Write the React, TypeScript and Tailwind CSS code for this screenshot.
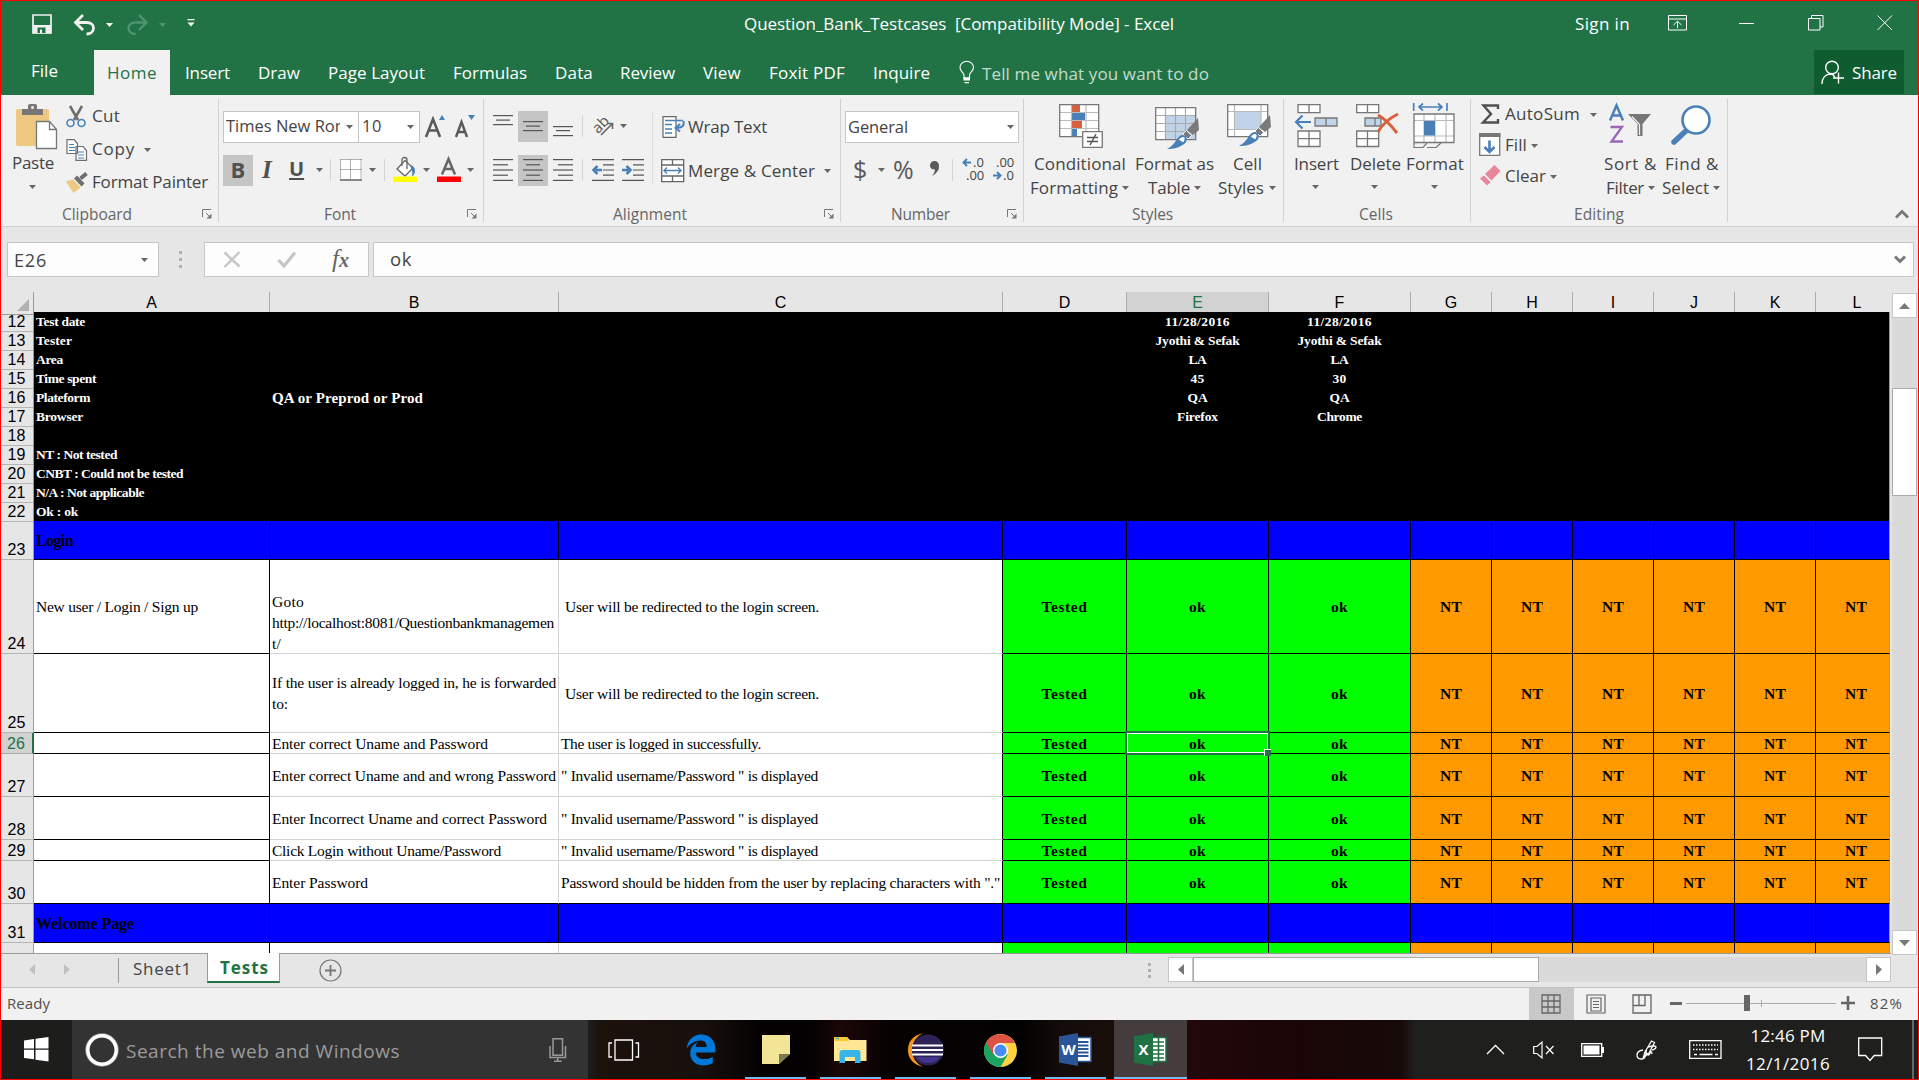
import { useLayoutEffect, useRef, useState, type ReactNode } from "react";
import { FaEdgeLegacy } from "react-icons/fa6";

/* Single line of text tracked so that it fills exactly w pixels. */
function T({ w, className = "", children }: { w: number; className?: string; children: string }) {
  const ref = useRef<HTMLSpanElement>(null);
  const [spacing, setSpacing] = useState(0);
  useLayoutEffect(() => {
    const natural = ref.current!.getBoundingClientRect().width;
    setSpacing((w - natural) / children.length);
  }, []);
  return (
    <span className={`block shrink-0 leading-none whitespace-pre ${className}`} style={{ width: w }}>
      <span ref={ref} style={{ letterSpacing: spacing }}>
        {children}
      </span>
    </span>
  );
}

function Svg({ w, h, className = "", children }: { w: number; h: number; className?: string; children: ReactNode }) {
  return (
    <svg width={w} height={h} viewBox={`0 0 ${w} ${h}`} fill="none" className={`block shrink-0 overflow-visible ${className}`}>
      {children}
    </svg>
  );
}

function Caret({ className = "text-[#666]" }: { className?: string }) {
  return (
    <Svg w={7} h={4} className={className}>
      <path d="M0 0h7L3.5 4z" fill="currentColor" />
    </Svg>
  );
}

function Launcher({ className = "" }: { className?: string }) {
  return (
    <Svg w={10} h={10} className={className}>
      <path d="M.5 8V.5H9M4 4l4 4" stroke="#777" />
      <path d="M9.5 4.5v5h-5z" fill="#777" />
    </Svg>
  );
}

const Sep = () => <div className="mt-1 h-[123px] w-px shrink-0 bg-[#d2d2d2]" />;
const MiniSep = ({ className = "" }: { className?: string }) => (
  <div className={`h-[22px] w-px shrink-0 bg-[#d4d4d4] ${className}`} />
);

function Lines({ rows, className = "" }: { rows: [number, number, number][]; className?: string }) {
  return (
    <Svg w={20} h={22} className={className}>
      {rows.map(([x, y, w]) => (
        <rect key={y} x={x} y={y} width={w} height={1.2} fill="#555" />
      ))}
    </Svg>
  );
}

function TitleBar() {
  return (
    <div className="flex h-[49px] items-start text-white">
      <Svg w={20} h={20} className="mt-[13px] ml-[31px]">
        <path d="M1 1h18v18H1z" stroke="#f1f1f1" strokeWidth="1.7" />
        <path d="M1 11h18v8.5H1z" fill="#f1f1f1" />
        <path d="M5.5 13.500h8V19h-3.500v-3.500h-2V19H5.500z" fill="#217346" />
      </Svg>
      <Svg w={23} h={20} className="mt-[14px] ml-[21px]">
        <path d="M3 7.500h10.500c4 0 7 2 7 5.500s-3 6-7 6" stroke="#f1f1f1" strokeWidth="2.800" />
        <path d="M10 0 2.500 7.500 10 15" stroke="#f1f1f1" strokeWidth="2.800" />
      </Svg>
      <Caret className="mt-[22px] ml-[10px] text-white" />
      <Svg w={23} h={20} className="mt-[14px] ml-[13px]">
        <path d="M20 7.500H9.500c-4 0-7 2-7 5.500s3 6 7 6M13 0l7.500 7.500L13 15" stroke="#4f9370" strokeWidth="2.400" />
      </Svg>
      <Caret className="mt-[22px] ml-[10px] text-[#4f9370]" />
      <Svg w={8} h={8} className="mt-[18px] ml-[21px]">
        <path d="M.5 0h7v1.300h-7zM.5 3.500h7L4 7.500z" fill="white" />
      </Svg>
      <T w={430} className="mt-[14px] ml-[549px] text-[17px]">Question_Bank_Testcases  [Compatibility Mode] - Excel</T>
      <T w={55} className="mt-[14px] ml-[401px] text-[17px]">Sign in</T>
      <Svg w={20} h={16} className="mt-[14px] ml-[38px]">
        <path d="M.5.500h18v14.500H.5zM.5 4h18M9.500 13V6.500M5.500 10l4-3.800 4 3.800" stroke="white" />
      </Svg>
      <div className="mt-[22px] ml-[51px] h-px w-[15px] bg-white" />
      <Svg w={16} h={16} className="mt-[14px] ml-[54px]">
        <path d="M.5 3.500h11.500v11.500H.5zM3.500 3.500V.500H15v11.500h-3" stroke="white" />
      </Svg>
      <Svg w={16} h={16} className="mt-[14px] ml-[53px]">
        <path d="m.5.500 14.500 14.500M15 .500.500 15" stroke="white" />
      </Svg>
    </div>
  );
}

function Tabs() {
  return (
    <div className="flex h-[45px] items-start text-[17px] text-white">
      <T w={27} className="mt-[12px] ml-[30px]">File</T>
      <div className="ml-[36px] h-[45px] w-[76px] bg-[#f1f1f1] pt-[14px] pl-[13px] text-[#217346]">
        <T w={50}>Home</T>
      </div>
      <T w={45} className="mt-[14px] ml-[15px]">Insert</T>
      <T w={42} className="mt-[14px] ml-[28px]">Draw</T>
      <T w={97} className="mt-[14px] ml-[28px]">Page Layout</T>
      <T w={74} className="mt-[14px] ml-[28px]">Formulas</T>
      <T w={38} className="mt-[14px] ml-[28px]">Data</T>
      <T w={55} className="mt-[14px] ml-[27px]">Review</T>
      <T w={38} className="mt-[14px] ml-[28px]">View</T>
      <T w={76} className="mt-[14px] ml-[28px]">Foxit PDF</T>
      <T w={57} className="mt-[14px] ml-[28px]">Inquire</T>
      <Svg w={16} h={23} className="mt-[11px] ml-[29px]">
        <path d="M5 17v-3C4 11 1 10 1 6.500a6.500 6 0 0 1 13.500 0C14.500 10 11 11 10.500 14v3z" stroke="white" strokeWidth="1.100" />
        <path d="M4.500 16.500h6.500v3H4.500zM5.500 21h4.500v1.300H5.500z" fill="white" />
      </Svg>
      <T w={227} className="mt-[15px] ml-[7px] text-[#c3dccd]">Tell me what you want to do</T>
      <div className="ml-[605px] flex h-[44px] w-[90px] items-center bg-[#0e5c2f]">
        <Svg w={24} h={25} className="ml-[7px]">
          <path d="M1 24c0-6 3.500-10 9.500-10M14 17.500c-1-2-2-3-3.500-3.500" stroke="white" strokeWidth="1.400" />
          <circle cx="11" cy="7.500" r="6.300" stroke="white" strokeWidth="1.400" />
          <path d="M17.500 12.500v11M12 18h11" stroke="white" strokeWidth="1.400" />
        </Svg>
        <T w={45} className="ml-[7px]">Share</T>
      </div>
    </div>
  );
}

function Clipboard() {
  return (
    <div className="flex w-[217px] shrink-0 flex-col">
      <div className="flex h-[108px]">
        <div className="flex w-[60px] flex-col">
          <Svg w={42} h={46} className="mt-[9px] ml-[15px]">
            <rect x="0" y="5" width="33" height="37" rx="2" fill="#eec780" />
            <path d="M6 5h6V1.500Q12 0 14 0h5q2 0 2 1.500V5h6v6H6z" fill="#777" />
            <circle cx="16.500" cy="3.500" r="1.500" fill="#f1f1f1" />
            <path d="M20.500 17.500h13l7 8v19h-20z" fill="white" stroke="#777" strokeWidth="1.300" />
            <path d="M33.500 17.500v8h7" stroke="#777" strokeWidth="1.300" />
          </Svg>
          <T w={42} className="mt-[4px] ml-[11px]">Paste</T>
          <div className="mt-[14px] ml-[28px]"><Caret /></div>
        </div>
        <div className="mt-[5px] ml-[5px] flex flex-col">
          <div className="flex h-[33px] items-center">
            <Svg w={20} h={22}>
              <path d="M4 0l8 14M16 0 8 14" stroke="#6e6e6e" strokeWidth="2.600" />
              <circle cx="4.500" cy="17" r="3.500" stroke="#4a80b8" strokeWidth="1.600" />
              <circle cx="15.500" cy="17" r="3.500" stroke="#4a80b8" strokeWidth="1.600" />
            </Svg>
            <T w={28} className="-mt-[2px] ml-[6px]">Cut</T>
          </div>
          <div className="flex h-[33px] items-center">
            <Svg w={21} h={22}>
              <path d="M1 .600h7l3.500 4V14.500H1zM10 7.500h7l3.500 4v9.900H10z" fill="white" stroke="#6e6e6e" strokeWidth="1.200" />
              <path d="M3 5.500h5M3 8.500h6M3 11.500h6M12 13h6M12 16h6M12 19h6" stroke="#4a80b8" strokeWidth="1.200" />
            </Svg>
            <T w={43} className="-mt-[2px] ml-[5px]">Copy</T>
            <div className="ml-[9px]"><Caret /></div>
          </div>
          <div className="flex h-[33px] items-center">
            <Svg w={22} h={21}>
              <path d="M0 9.500 7 7.500l7.500 8L7.500 21z" fill="#eec780" />
              <path d="m8 6.500 3-3 7.500 8-3 3z" fill="#6e6e6e" />
              <path d="m14.500 6.500 6-5" stroke="#6e6e6e" strokeWidth="4" />
            </Svg>
            <T w={116} className="-mt-[2px] ml-[4px]">Format Painter</T>
          </div>
        </div>
      </div>
      <div className="flex h-[24px] items-center text-[15.500px] text-[#666]">
        <T w={70} className="mt-[2px] ml-[61px]">Clipboard</T>
        <Launcher className="ml-[70px]" />
      </div>
    </div>
  );
}

function FontGroup() {
  return (
    <div className="flex w-[264px] shrink-0 flex-col">
      <div className="h-[108px] pt-[15px]">
        <div className="flex h-[33px] items-center">
          <div className="ml-[4px] flex h-[32px] w-[136px] items-center border border-[#c6c6c6] bg-white">
            <div className="ml-[2px] w-[114px] overflow-hidden py-1"><T w={124} className="text-[16.500px]">Times New Rom</T></div>
            <div className="ml-[6px]"><Caret /></div>
          </div>
          <div className="-ml-px flex h-[32px] w-[62px] items-center border border-[#c6c6c6] bg-white">
            <T w={20} className="ml-[3px] text-[16.500px]">10</T>
            <div className="ml-[25px]"><Caret /></div>
          </div>
          <Svg w={21} h={24} className="ml-[5px]">
            <path d="M1 22 8 4l7 18M3.500 15.500h9" stroke="#5a5a5a" strokeWidth="2.600" />
            <path d="M14 5h6l-3-5z" fill="#4a80b8" />
          </Svg>
          <Svg w={21} h={24} className="ml-[9px]">
            <path d="m1 22 5.500-15L12 22M3.500 17h6" stroke="#5a5a5a" strokeWidth="2.400" />
            <path d="M13 0h7l-3.500 5z" fill="#4a80b8" />
          </Svg>
        </div>
        <div className="mt-[11px] flex h-[32px] items-center text-[#505050]">
          <div className="ml-[4px] flex h-[31px] w-[30px] items-center justify-center bg-[#c5c5c5] pb-[2px] text-[22px] leading-none font-bold">B</div>
          <span className="-mt-[2px] ml-[9px] w-[14px] font-['Liberation_Serif'] text-[25px] leading-none font-bold italic">I</span>
          <span className="-mt-[2px] ml-[13px] w-[17px] text-[20px] leading-none font-bold underline underline-offset-2">U</span>
          <div className="ml-[10px]"><Caret /></div>
          <MiniSep className="ml-[7px]" />
          <Svg w={22} h={22} className="ml-[9px]">
            <rect width="22" height="22" fill="white" />
            <path d="M.5.500h21M.5 10.500h21M.5.500v20M21 .500v20M10.500.500v20" stroke="#666" strokeDasharray="1 1" />
            <path d="M0 21h22" stroke="#555" strokeWidth="1.400" />
          </Svg>
          <div className="ml-[7px]"><Caret /></div>
          <MiniSep className="ml-[8px]" />
          <Svg w={25} h={26} className="ml-[8px]">
            <path d="M12 3.500 20 11l-8 8-8-7z" fill="white" stroke="#666" strokeWidth="1.300" />
            <path d="M9 9V3q0-2.500 2.500-2.500T14 3v9" stroke="#666" strokeWidth="1.300" />
            <path d="M17 8q5 1 5 5.500 0 4-3 6 1-5-1-8z" fill="#4a80b8" />
            <path d="M0 19.500h24V25H0z" fill="#ff0" />
          </Svg>
          <div className="ml-[5px]"><Caret /></div>
          <Svg w={25} h={26} className="ml-[7px]">
            <path d="m5 17.500 6.500-15.500L18 17.500M7.500 12h8" stroke="#666" strokeWidth="2.500" />
            <path d="M0 19.500h24V25H0z" fill="red" />
          </Svg>
          <div className="ml-[5px]"><Caret /></div>
        </div>
      </div>
      <div className="flex h-[24px] items-center text-[15.500px] text-[#666]">
        <T w={32} className="mt-[2px] ml-[105px]">Font</T>
        <Launcher className="ml-[111px]" />
      </div>
    </div>
  );
}

const justified = (xs: [number, number][]): [number, number, number][] => xs.map(([x, w], i) => [x, i * 5.2, w]);

function Alignment() {
  return (
    <div className="flex w-[356px] shrink-0 flex-col">
      <div className="flex h-[108px]">
        <div className="w-[168px] pt-[15px]">
          <div className="flex h-[32px] items-center">
            <Lines className="ml-[9px]" rows={[[0, 0, 20], [3, 4.500, 14], [0, 9, 20]]} />
            <div className="ml-[5px] flex h-[31px] w-[30px] items-center justify-center bg-[#c5c5c5]">
              <Lines rows={[[0, 6, 20], [3, 10.500, 14], [0, 15, 20]]} />
            </div>
            <Lines className="ml-[5px]" rows={[[0, 11, 20], [3, 15, 14], [0, 20, 20]]} />
            <MiniSep className="ml-[9px]" />
            <Svg w={22} h={20} className="ml-[10px]">
              <text x="-1" y="14" transform="rotate(-45 7 9)" fontSize="15" fill="#555" fontFamily="Open Sans">ab</text>
              <path d="M8 19 19 8M14 7.500h5.500V13" stroke="#666" strokeWidth="1.600" />
            </Svg>
            <div className="ml-[5px]"><Caret /></div>
          </div>
          <div className="mt-[12px] flex h-[32px] items-center">
            <Lines className="ml-[9px]" rows={justified([[0, 20], [0, 15], [0, 20], [0, 15], [0, 20]])} />
            <div className="ml-[5px] flex h-[31px] w-[30px] items-center justify-center bg-[#c5c5c5]">
              <Lines rows={justified([[0, 20], [3, 14], [0, 20], [3, 14], [0, 20]])} />
            </div>
            <Lines className="ml-[5px]" rows={justified([[0, 20], [5, 15], [0, 20], [5, 15], [0, 20]])} />
            <MiniSep className="ml-[9px]" />
            <Svg w={22} h={22} className="ml-[9px]">
              <path d="M0 .600h22M11 5.800h11M11 11h11M11 16.200h11M0 21.400h22" stroke="#555" strokeWidth="1.200" />
              <path d="M10 11H2M5.500 7 1.500 11l4 4" stroke="#4a80b8" strokeWidth="2.600" />
            </Svg>
            <Svg w={22} h={22} className="ml-[8px]">
              <path d="M0 .600h22M11 5.800h11M11 11h11M11 16.200h11M0 21.400h22" stroke="#555" strokeWidth="1.200" />
              <path d="M0 11h8M4.500 7l4 4-4 4" stroke="#4a80b8" strokeWidth="2.600" />
            </Svg>
          </div>
        </div>
        <div className="mt-[17px] h-[73px] w-px bg-[#dedede]" />
        <div className="pt-[15px]">
          <div className="flex h-[34px] items-center">
            <Svg w={24} h={23} className="ml-[9px]">
              <path d="M1 .600h13v20.800H1z" fill="white" stroke="#666" strokeWidth="1.200" />
              <path d="M3 4.500h18M3 8.500h7M3 13h7M3 17h7" stroke="#4a80b8" strokeWidth="1.300" />
              <path d="M21.500 5q1.500 7-7 7M18 8l-4.500 4 4.500 3.500" stroke="#4a80b8" strokeWidth="2" />
            </Svg>
            <T w={79} className="-mt-[2px] ml-[2px]">Wrap Text</T>
          </div>
          <div className="mt-[10px] flex h-[33px] items-center">
            <Svg w={24} h={24} className="ml-[8px]">
              <path d="M.7.700h22v22H.7zM.7 6h22M.7 17h22M11.500.700V6M11.500 17v6" fill="white" stroke="#666" strokeWidth="1.300" />
              <path d="M3 11.500h17M6 8.500l-3 3 3 3M17 8.500l3 3-3 3" stroke="#4a80b8" strokeWidth="1.400" />
            </Svg>
            <T w={127} className="ml-[3px]">Merge &amp; Center</T>
            <div className="ml-[9px]"><Caret /></div>
          </div>
        </div>
      </div>
      <div className="flex h-[24px] items-center text-[15.500px] text-[#666]">
        <T w={74} className="mt-[2px] ml-[129px]">Alignment</T>
        <Launcher className="ml-[137px]" />
      </div>
    </div>
  );
}

function NumberGroup() {
  return (
    <div className="flex w-[182px] shrink-0 flex-col">
      <div className="h-[108px] pt-[16px]">
        <div className="ml-[4px] flex h-[32px] w-[174px] items-center border border-[#c6c6c6] bg-white">
          <T w={60} className="ml-[2px] text-[16.500px]">General</T>
          <div className="ml-[99px]"><Caret /></div>
        </div>
        <div className="mt-[11px] flex h-[32px] items-center text-[#5a5a5a]">
          <span className="-mt-[2px] ml-[12px] w-[16px] text-[25px] leading-none">$</span>
          <div className="ml-[9px]"><Caret /></div>
          <span className="-mt-[2px] ml-[8px] w-[23px] text-[25px] leading-none tracking-tighter">%</span>
          <Svg w={12} h={16} className="-mt-[2px] ml-[13px]">
            <path d="M1 4.500A4.500 4.500 0 0 1 10 4.500Q10.500 11 3 15q3-3.500 3-6.500-5 0-5-4z" fill="#5a5a5a" />
          </Svg>
          <MiniSep className="ml-[11px]" />
          <Svg w={24} h={26} className="ml-[9px]">
            <text x="11" y="10" fontSize="13" fill="#444" fontFamily="Open Sans">.0</text>
            <text x="4" y="23" fontSize="13" fill="#444" fontFamily="Open Sans">.00</text>
            <path d="M9 5.500H2M5 2 1.500 5.500 5 9" stroke="#4a80b8" strokeWidth="2" />
          </Svg>
          <Svg w={24} h={26} className="ml-[6px]">
            <text x="4" y="10" fontSize="13" fill="#444" fontFamily="Open Sans">.00</text>
            <text x="11" y="23" fontSize="13" fill="#444" fontFamily="Open Sans">.0</text>
            <path d="M1 18.500h7M5 15l3.500 3.500L5 22" stroke="#4a80b8" strokeWidth="2" />
          </Svg>
        </div>
      </div>
      <div className="flex h-[24px] items-center text-[15.500px] text-[#666]">
        <T w={59} className="mt-[2px] ml-[50px]">Number</T>
        <Launcher className="ml-[57px]" />
      </div>
    </div>
  );
}

function Brush() {
  return (
    <g>
      <path d="m43 11 1 12-6 5-6-5z" fill="#7a7a7a" />
      <path d="m31.500 23.500 5 5-3.500 3.500-5-5z" fill="#7a7a7a" stroke="#f1f1f1" />
      <path d="M22 32q4-6 9-3 3 6-5 10-6 3.500-14 3 6-3 10-10z" fill="#4a80b8" />
      <path d="M23 33q3-5 7-3 1 4-2 6-3-2-5-3z" fill="white" stroke="#4a80b8" strokeWidth="1.300" />
    </g>
  );
}

function Styles() {
  return (
    <div className="flex w-[259px] shrink-0 flex-col">
      <div className="flex h-[108px]">
        <div className="ml-[6px] w-[101px] pt-[9px]">
          <Svg w={46} h={45} className="ml-[29px]">
            <path d="M.7.700h39v32H.7z" fill="white" />
            <path d="M13 1h8v7h-8zM13 17h10v7H13z" fill="#d9603f" />
            <path d="M13 9h13v7H13zM13 25h5v7h-5z" fill="#4a80b8" />
            <path d="M.7 8.500h39M.7 16.500h39M.7 24.500h39M12.500.700v32M27 .700v32" stroke="#bbb" strokeWidth="1.200" />
            <path d="M.7.700h39v32H.7z" stroke="#777" strokeWidth="1.300" />
            <path d="M23.700 27.700h19.600v15.600H23.700z" fill="white" stroke="#777" strokeWidth="1.300" />
            <path d="M28 33.500h11M28 37.500h11M37 30l-6 11" stroke="#555" strokeWidth="1.400" />
          </Svg>
          <T w={92} className="mt-[6px] ml-[4px]">Conditional</T>
          <div className="mt-[7px] flex items-center">
            <T w={88}>Formatting</T>
            <div className="ml-[4px]"><Caret /></div>
          </div>
        </div>
        <div className="ml-[3px] w-[82px] pt-[12px]">
          <Svg w={46} h={45} className="ml-[21px]">
            <path d="M.7.700h40v32H.7z" fill="white" />
            <path d="M10 9h31v24H10z" fill="#c0d3e9" />
            <path d="M.7 8.500h40M.7 16.500h40M.7 24.500h40M10.500.700v32M20.500.700v32M30.500.700v32" stroke="#aaa" strokeWidth="1.200" />
            <path d="M.7.700h40v32H.7z" stroke="#777" strokeWidth="1.300" />
            <Brush />
          </Svg>
          <T w={79} className="mt-[3px] ml-[1px]">Format as</T>
          <div className="mt-[7px] ml-[14px] flex items-center">
            <T w={42}>Table</T>
            <div className="ml-[4px]"><Caret /></div>
          </div>
        </div>
        <div className="w-[63px] pt-[9px]">
          <Svg w={46} h={45} className="ml-[11px]">
            <path d="M.7.700h40v32H.7z" fill="white" />
            <path d="M8 8h26v17H8z" fill="#c0d3e9" />
            <path d="M.7 7.500h40M.7 25.500h40M7.500.700v32M34 .700v32" stroke="#bbb" strokeWidth="1.200" />
            <path d="M.7.700h40v32H.7z" stroke="#777" strokeWidth="1.300" />
            <Brush />
          </Svg>
          <T w={29} className="mt-[6px] ml-[17px]">Cell</T>
          <div className="mt-[7px] ml-[2px] flex items-center">
            <T w={46}>Styles</T>
            <div className="ml-[5px]"><Caret /></div>
          </div>
        </div>
      </div>
      <div className="flex h-[24px] items-center text-[15.500px] text-[#666]">
        <T w={41} className="mt-[2px] ml-[108px]">Styles</T>
      </div>
    </div>
  );
}

function Cells() {
  return (
    <div className="flex w-[186px] shrink-0 flex-col">
      <div className="flex h-[108px]">
        <div className="ml-[10px] w-[48px] pt-[9px]">
          <Svg w={46} h={45}>
            <path d="M4 .700h22v8H4zM15 .700v8M4 27h22v15.500H4zM4 34.700h22M15 27v15.500" fill="white" stroke="#777" strokeWidth="1.300" />
            <path d="M21 14h22v8H21zM32 14v8" fill="#c0d3e9" stroke="#777" strokeWidth="1.300" />
            <path d="M17 18H2M8.500 11.500 2 18l6.500 6.500" stroke="#4a80b8" strokeWidth="2.200" />
          </Svg>
          <T w={45} className="mt-[6px]">Insert</T>
          <div className="mt-[13px] ml-[18px]"><Caret /></div>
        </div>
        <div className="ml-[8px] w-[52px] pt-[9px]">
          <Svg w={46} h={45} className="ml-[6px]">
            <path d="M.7.700h22v8H.7zM11.500.700v8M.7 27h22v15.500H.7zM.7 34.700h22M11.500 27v15.500" fill="white" stroke="#777" strokeWidth="1.300" />
            <path d="M9 14h16v8H9zM19 14v8" fill="#c0d3e9" stroke="#777" strokeWidth="1.300" />
            <path d="M22 11q9 5 19 18M42 10Q28 17 22 28" stroke="#d9603f" strokeWidth="3" />
          </Svg>
          <T w={51} className="mt-[6px]">Delete</T>
          <div className="mt-[13px] ml-[21px]"><Caret /></div>
        </div>
        <div className="ml-[4px] w-[60px] pt-[8px]">
          <Svg w={44} h={46} className="ml-[7px]">
            <path d="M.7 0v8M34 0v8M6 4h23M10 .500 6 4l4 3.500M25 .500 29 4l-4 3.500" stroke="#4a80b8" strokeWidth="1.700" />
            <path d="M1 11h40v28.500H1z" fill="white" />
            <path d="M1 17.500h40M1 33h40M11 11v28M22 11v28M33 11v28" stroke="#bbb" strokeWidth="1.200" />
            <path d="M11 18h11v14.500H11z" fill="#4a80b8" />
            <path d="M1 11h40v28.500H1z" stroke="#777" strokeWidth="1.300" />
            <path d="M1 40v4.500h9l4-4.500M14 44.500h9l5-4.500" stroke="#777" strokeWidth="1.200" />
          </Svg>
          <T w={58} className="mt-[6px]">Format</T>
          <div className="mt-[13px] ml-[25px]"><Caret /></div>
        </div>
      </div>
      <div className="flex h-[24px] items-center text-[15.500px] text-[#666]">
        <T w={34} className="mt-[2px] ml-[75px]">Cells</T>
      </div>
    </div>
  );
}

function Editing() {
  return (
    <div className="flex w-[256px] shrink-0 flex-col">
      <div className="flex h-[108px]">
        <div className="w-[127px] pt-[4px]">
          <div className="flex h-[31px] items-center">
            <Svg w={18} h={20} className="-mt-[2px] ml-[10px]">
              <path d="M17 5V1.500H2.500L10 10l-8 8.500h15V15" stroke="#505050" strokeWidth="2.400" />
            </Svg>
            <T w={75} className="-mt-[2px] ml-[6px]">AutoSum</T>
            <div className="ml-[10px]"><Caret /></div>
          </div>
          <div className="flex h-[31px] items-center">
            <Svg w={22} h={24} className="-mt-[2px] ml-[8px]">
              <path d="M.7.700h20v21.600H.7z" fill="white" stroke="#777" strokeWidth="1.300" />
              <path d="M0 0h21.400v4H0z" fill="#777" />
              <path d="M10.500 7.500V19M5.500 14l5 5 5-5" stroke="#4a80b8" strokeWidth="2.600" />
            </Svg>
            <T w={22} className="-mt-[2px] ml-[4px]">Fill</T>
            <div className="ml-[4px]"><Caret /></div>
          </div>
          <div className="flex h-[31px] items-center">
            <Svg w={21} h={21} className="-mt-[2px] ml-[9px]">
              <path d="M14.500 0 20.500 6l-9 9.500L5 9z" fill="#e8879a" />
              <path d="m4 10.500 6.500 6.500L7 20.500 0 13.500z" fill="#e8879a" />
            </Svg>
            <T w={41} className="-mt-[2px] ml-[4px]">Clear</T>
            <div className="ml-[4px]"><Caret /></div>
          </div>
        </div>
        <div className="ml-[6px] w-[56px] pt-[9px]">
          <Svg w={46} h={41} className="ml-[5px]">
            <path d="m1 16.500 6.500-15L14 16.500M3.500 11.500h8" stroke="#4a80b8" strokeWidth="2.500" />
            <path d="M1.500 23H13L2.500 37.500H14" stroke="#9a66b8" strokeWidth="2.300" />
            <path d="M19 10h23L33.500 20v12h-5V20z" fill="#777" />
            <path d="m23 12.500 7.500 8V31" stroke="#f1f1f1" strokeWidth="1.200" />
          </Svg>
          <T w={53} className="mt-[10px]">Sort &amp;</T>
          <div className="mt-[7px] ml-[2px] flex items-center">
            <T w={38}>Filter</T>
            <div className="ml-[4px]"><Caret /></div>
          </div>
        </div>
        <div className="ml-[1px] w-[62px] pt-[10px]">
          <Svg w={42} h={42} className="ml-[10px]">
            <path d="M3 37 18 23" stroke="#4a80b8" strokeWidth="5.500" strokeLinecap="round" />
            <circle cx="25" cy="15" r="13.500" fill="white" stroke="#4a80b8" strokeWidth="2.600" />
          </Svg>
          <T w={54} className="mt-[8px] ml-[4px]">Find &amp;</T>
          <div className="mt-[7px] ml-[1px] flex items-center">
            <T w={47}>Select</T>
            <div className="ml-[4px]"><Caret /></div>
          </div>
        </div>
      </div>
      <div className="flex h-[24px] items-center text-[15.500px] text-[#666]">
        <T w={50} className="mt-[2px] ml-[103px]">Editing</T>
      </div>
    </div>
  );
}

function Ribbon() {
  return (
    <div className="flex h-[132px] border-b border-[#d2d2d2] bg-[#f1f1f1] text-[17px] text-[#444]">
      <Clipboard /><Sep /><FontGroup /><Sep /><Alignment /><Sep /><NumberGroup /><Sep /><Styles /><Sep /><Cells /><Sep /><Editing /><Sep />
      <Svg w={14} h={10} className="mt-[114px] ml-[167px]">
        <path d="m1 8.500 6-6 6 6" stroke="#777" strokeWidth="2.800" />
      </Svg>
    </div>
  );
}

function FormulaBar() {
  return (
    <div className="flex h-[65px] pt-[15px] text-[17px] text-[#444]">
      <div className="ml-[6px] flex h-[35px] w-[152px] items-center border border-[#c6c6c6] bg-[#fdfdfd]">
        <T w={33} className="ml-[6px] text-[18px]">E26</T>
        <div className="ml-[94px]"><Caret /></div>
      </div>
      <div className="mt-[9px] ml-[20px] flex w-[3px] flex-col gap-[4px]">
        <i className="h-[3px] bg-[#b0b0b0]" /><i className="h-[3px] bg-[#b0b0b0]" /><i className="h-[3px] bg-[#b0b0b0]" />
      </div>
      <div className="ml-[22px] flex h-[35px] w-[165px] items-center border border-[#c6c6c6] bg-[#fdfdfd]">
        <Svg w={18} h={17} className="ml-[18px]">
          <path d="m1.500 1.500 15 14M16.500 1 1.500 16" stroke="#c6c6c6" strokeWidth="2.400" />
        </Svg>
        <Svg w={20} h={17} className="ml-[36px]">
          <path d="m1.500 9 5.500 6L18 1.500" stroke="#c6c6c6" strokeWidth="3.200" />
        </Svg>
        <span className="-mt-[3px] ml-[35px] flex items-baseline font-['Liberation_Serif'] leading-none font-bold text-[#666] italic">
          <span className="text-[25px] font-normal">f</span>
          <span className="text-[20px]">x</span>
        </span>
      </div>
      <div className="ml-[4px] flex h-[35px] w-[1541px] items-center border border-[#c6c6c6] bg-[#fdfdfd]">
        <T w={22} className="ml-[16px] text-[18.500px]">ok</T>
        <Svg w={12} h={9} className="ml-[1482px]">
          <path d="m1 1.500 5 5 5-5" stroke="#777" strokeWidth="3" />
        </Svg>
      </div>
    </div>
  );
}

const GRID = "grid grid-cols-[33px_236px_289px_444px_124px_142px_142px_81px_81px_81px_81px_81px_74px]";

function ColumnHeader() {
  return (
    <div className={`${GRID} h-[20px] font-['Liberation_Sans'] text-[16px] leading-[21px] text-black`}>
      <div className="flex items-end justify-end border-r border-b border-[#9b9b9b] pr-[4px] pb-[3px]">
        <Svg w={12} h={12}><path d="M12 0v12H0z" fill="#b2b2b2" /></Svg>
      </div>
      {"ABCDEFGHIJKL".split("").map((c) => (
        <div
          key={c}
          className={
            c === "E"
              ? "border-r border-b-2 border-r-[#ababab] border-b-[#217346] bg-[#d2d2d2] text-center text-[#217346]"
              : c === "L"
                ? "border-b border-[#9b9b9b] pl-[8px] text-center"
                : "border-r border-b border-r-[#ababab] border-b-[#9b9b9b] text-center"
          }
        >
          {c}
        </div>
      ))}
    </div>
  );
}

function RowHead({ n, selected = false }: { n: string; selected?: boolean }) {
  return (
    <div
      className={`flex items-end justify-center pr-[1px] font-['Liberation_Sans'] text-[16px] leading-[19px] ${
        selected
          ? "border-r-2 border-b border-r-[#217346] border-b-[#ababab] bg-[#d2d2d2] text-[#217346]"
          : "border-r border-b border-r-[#9b9b9b] border-b-[#b5b5b5] text-black"
      }`}
    >
      {n}
    </div>
  );
}

type Fit = [string, number];
const dark: { n: string; a?: Fit; b?: Fit; e?: Fit; f?: Fit }[] = [
  { n: "12", a: ["Test date", 49], e: ["11/28/2016", 65], f: ["11/28/2016", 65] },
  { n: "13", a: ["Tester", 36], e: ["Jyothi & Sefak", 84], f: ["Jyothi & Sefak", 84] },
  { n: "14", a: ["Area", 27], e: ["LA", 18], f: ["LA", 18] },
  { n: "15", a: ["Time spent", 60], e: ["45", 14], f: ["30", 14] },
  { n: "16", a: ["Plateform", 54], b: ["QA or Preprod or Prod", 151], e: ["QA", 20], f: ["QA", 20] },
  { n: "17", a: ["Browser", 47], e: ["Firefox", 41], f: ["Chrome", 45] },
  { n: "18" },
  { n: "19", a: ["NT : Not tested", 81] },
  { n: "20", a: ["CNBT : Could not be tested", 147] },
  { n: "21", a: ["N/A : Not applicable", 108] },
  { n: "22", a: ["Ok : ok", 42] },
];

function DarkRow({ row }: { row: (typeof dark)[number] }) {
  const fit = (f?: Fit, cls = "") => (f ? <T w={f[1]} className={cls}>{f[0]}</T> : null);
  return (
    <div className={`${GRID} h-[19px] shrink-0`}>
      <RowHead n={row.n} />
      <div className="col-span-12 grid grid-cols-subgrid border-r border-[#9b9b9b] bg-black font-['Liberation_Serif'] text-[13.500px] font-bold text-white">
        <div className="flex items-center pb-px pl-[2px]">{fit(row.a)}</div>
        <div className="flex items-center pt-px pl-[2px]">{fit(row.b, "text-[15px]")}</div>
        <div />
        <div />
        <div className="flex items-center justify-center pr-px pb-px">{fit(row.e)}</div>
        <div className="flex items-center justify-center pr-px pb-px">{fit(row.f)}</div>
      </div>
    </div>
  );
}

function BlueRow({ n, label }: { n: string; label: Fit }) {
  return (
    <div className={`${GRID} h-[39px] shrink-0`}>
      <RowHead n={n} />
      <div className="flex items-center border-r border-b border-black bg-[#00f] pt-[2px] pl-[2px] font-['Liberation_Serif'] text-[16px] font-bold text-black">
        <T w={label[1]}>{label[0]}</T>
      </div>
      {"BCDEFGHIJK".split("").map((c) => (
        <div key={c} className="border-r border-b border-black bg-[#00f]" />
      ))}
      <div className="border-r border-b border-r-[#9b9b9b] border-b-black bg-[#00f]" />
    </div>
  );
}

type Data = { n: string; h: string; a?: Fit; b: Fit[]; c: Fit; indent?: boolean; low?: boolean; last?: boolean };
const tests: Data[] = [
  {
    n: "24", h: "h-[94px]", a: ["New user / Login / Sign up", 162],
    b: [["Goto", 32], ["http://localhost:8081/Questionbankmanagemen", 282], ["t/", 9]],
    c: ["User will be redirected to the login screen.", 254], indent: true, low: true,
  },
  {
    n: "25", h: "h-[79px]", b: [["If the user is already logged in, he is forwarded", 284], ["to:", 16]],
    c: ["User will be redirected to the login screen.", 254], indent: true,
  },
  { n: "26", h: "h-[21px]", b: [["Enter correct Uname and Password", 216]], c: ["The user is logged in successfully.", 200] },
  { n: "27", h: "h-[43px]", b: [["Enter correct Uname and and wrong Password", 284]], c: ['" Invalid username/Password " is displayed', 257] },
  { n: "28", h: "h-[43px]", b: [["Enter Incorrect Uname and correct Password", 275]], c: ['" Invalid username/Password " is displayed', 257] },
  { n: "29", h: "h-[21px]", b: [["Click Login without Uname/Password", 229]], c: ['" Invalid username/Password " is displayed', 257] },
  {
    n: "30", h: "h-[43px]", b: [["Enter Password", 96]],
    c: ['Password should be hidden from the user by replacing characters with "."', 439], last: true,
  },
];

const GREEN = "relative flex items-center justify-center border-r border-b border-black bg-[#0f0] pt-px text-[15.500px] font-bold";
const ORANGE = "flex items-center justify-center border-r border-b border-black bg-[#f90] pt-px text-[15.500px] font-bold";

function TestRow({ row }: { row: Data }) {
  const selected = row.n === "26";
  return (
    <div className={`${GRID} ${row.h} shrink-0 font-['Liberation_Serif'] text-[15.500px] text-black`}>
      <RowHead n={row.n} selected={selected} />
      <div className="flex items-center border-r border-b border-black bg-white pt-px pl-[2px]">
        {row.a && <T w={row.a[1]}>{row.a[0]}</T>}
      </div>
      <div
        className={`flex flex-col gap-[5.500px] border-r border-b border-r-[#d4d4d4] bg-white pt-px pl-[2px] ${
          row.low ? "justify-end pb-[2px]" : "justify-center"
        } ${row.last ? "border-b-black" : "border-b-[#d4d4d4]"}`}
      >
        {row.b.map(([s, w]) => (
          <T key={s} w={w}>{s}</T>
        ))}
      </div>
      <div
        className={`flex items-center border-r border-b border-r-black bg-white pt-px ${row.indent ? "pl-[6px]" : "pl-[2px]"} ${
          row.last ? "border-b-black" : "border-b-[#d4d4d4]"
        }`}
      >
        <T w={row.c[1]}>{row.c[0]}</T>
      </div>
      <div className={GREEN}><T w={46}>Tested</T></div>
      <div className={GREEN}>
        <T w={17}>ok</T>
        {selected && (
          <div className="absolute -top-[2px] -left-[2px] z-10 h-[24px] w-[145px] border-2 border-[#217346]">
            <div className="h-full border border-white" />
            <div className="absolute -right-[3px] -bottom-[3px] h-[7px] w-[7px] border-t border-l border-white bg-[#217346]" />
          </div>
        )}
      </div>
      <div className={GREEN}><T w={17}>ok</T></div>
      {"GHIJK".split("").map((c) => (
        <div key={c} className={ORANGE}><T w={22}>NT</T></div>
      ))}
      <div className={`${ORANGE} border-r-[#9b9b9b] pl-[7px]`}><T w={22}>NT</T></div>
    </div>
  );
}

function Sheet() {
  return (
    <div className="flex h-[661px]">
      <div className="flex w-[1889px] shrink-0 flex-col">
        <ColumnHeader />
        {dark.map((r) => <DarkRow key={r.n} row={r} />)}
        <BlueRow n="23" label={["Login", 37]} />
        {tests.map((r) => <TestRow key={r.n} row={r} />)}
        <BlueRow n="31" label={["Welcome Page", 98]} />
        <div className={`${GRID} h-[10px]`}>
          <div className="border-r border-[#9b9b9b]" />
          <div className="border-r border-black bg-white" />
          <div className="border-r border-[#d4d4d4] bg-white" />
          <div className="border-r border-black bg-white" />
          <div className="border-r border-black bg-[#0f0]" />
          <div className="border-r border-black bg-[#0f0]" />
          <div className="border-r border-black bg-[#0f0]" />
          {"GHIJK".split("").map((c) => <div key={c} className="border-r border-black bg-[#f90]" />)}
          <div className="border-r border-[#9b9b9b] bg-[#f90]" />
        </div>
      </div>
      <div className="z-10 mt-px ml-[2px] flex h-[662px] w-[25px] flex-col bg-[#dadada]">
        <div className="flex h-[25px] items-center justify-center border border-[#c6c6c6] bg-white">
          <Svg w={11} h={6}><path d="M0 6h11L5.500 0z" fill="#777" /></Svg>
        </div>
        <div className="mt-[70px] h-[108px] border border-[#ababab] bg-white" />
        <div className="mt-auto flex h-[25px] items-center justify-center border border-[#c6c6c6] bg-white">
          <Svg w={11} h={6}><path d="M0 0h11L5.500 6z" fill="#777" /></Svg>
        </div>
      </div>
    </div>
  );
}

function SheetTabs() {
  return (
    <div className="flex h-[35px] border-b border-[#c0c0c0] text-[17px] text-[#444]">
      <div className="flex w-[206px] items-center border-t border-[#9b9b9b]">
        <Svg w={6} h={11} className="-mt-[2px] ml-[28px]"><path d="M6 0v11L0 5.500z" fill="#c0c0c0" /></Svg>
        <Svg w={6} h={11} className="-mt-[2px] ml-[29px]"><path d="M0 0v11l6-5.500z" fill="#c0c0c0" /></Svg>
        <div className="ml-[48px] h-[25px] w-px bg-[#9b9b9b]" />
        <T w={59} className="-mt-[5px] ml-[14px]">Sheet1</T>
      </div>
      <div className="h-[30px] w-[73px] border-x border-b-2 border-x-[#9b9b9b] border-b-[#217346] bg-white pt-[6px] pl-[12px] font-bold text-[#217346]">
        <T w={49}>Tests</T>
      </div>
      <div className="flex w-[1611px] items-center border-t border-[#9b9b9b]">
        <Svg w={23} h={23} className="-mt-[1px] ml-[39px]">
          <circle cx="11.500" cy="11.500" r="10.500" stroke="#777" strokeWidth="1.200" />
          <path d="M11.500 6v11M6 11.500h11" stroke="#777" strokeWidth="1.800" />
        </Svg>
        <div className="ml-[806px] flex w-[3px] flex-col gap-[3px]">
          <i className="h-[3px] bg-[#b0b0b0]" /><i className="h-[3px] bg-[#b0b0b0]" /><i className="h-[3px] bg-[#b0b0b0]" />
        </div>
        <div className="-mt-[2px] ml-[17px] flex h-[25px] w-[723px] bg-[#dadada]">
          <div className="flex w-[25px] items-center justify-center border border-[#c6c6c6] bg-white">
            <Svg w={6} h={11}><path d="M6 0v11L0 5.500z" fill="#777" /></Svg>
          </div>
          <div className="w-[346px] border border-[#ababab] bg-white" />
          <div className="ml-auto flex w-[25px] items-center justify-center border border-[#c6c6c6] bg-white">
            <Svg w={6} h={11}><path d="M0 0v11l6-5.500z" fill="#777" /></Svg>
          </div>
        </div>
      </div>
      <div className="flex-1" />
    </div>
  );
}

function StatusBar() {
  return (
    <div className="flex h-[32px] items-center bg-[#f1f1f1] text-[15px] text-[#505050]">
      <T w={43} className="-mt-[2px] ml-[6px]">Ready</T>
      <div className="ml-[1479px] flex h-full w-[45px] items-center justify-center bg-[#c8c8c8]">
        <Svg w={20} h={20} className="-mt-[1px] -ml-[1px]">
          <path d="M1 1h18v18H1zM7 1v18M13 1v18M1 7h18M1 13h18" stroke="#666" strokeWidth="1.300" />
        </Svg>
      </div>
      <Svg w={20} h={20} className="-mt-[1px] ml-[12px]">
        <path d="M1 1h18v18H1zM5 4h10v13H5zM7 7.500h6M7 10.500h6M7 13.500h6" stroke="#666" strokeWidth="1.200" />
      </Svg>
      <Svg w={20} h={20} className="-mt-[1px] ml-[26px]">
        <path d="M1 1h18v18H1zM1 11.500h12V1M7 1v10.500" stroke="#666" strokeWidth="1.300" />
      </Svg>
      <div className="-mt-[2px] ml-[18px] h-[3px] w-[12px] bg-[#666]" />
      <div className="-mt-[2px] ml-[4px] flex w-[150px] items-center">
        <div className="h-px w-[58px] bg-[#ababab]" />
        <div className="h-[16px] w-[6px] bg-[#666]" />
        <div className="h-px w-[11px] bg-[#ababab]" />
        <div className="h-[7px] w-px bg-[#ababab]" />
        <div className="h-px w-[74px] bg-[#ababab]" />
      </div>
      <Svg w={14} h={14} className="-mt-[2px] ml-[5px]"><path d="M7 0v14M0 7h14" stroke="#666" strokeWidth="2.600" /></Svg>
      <T w={33} className="-mt-[2px] ml-[15px]">82%</T>
    </div>
  );
}

function OfficeIcon({ letter, fill }: { letter: string; fill: string }) {
  return (
    <Svg w={33} h={34}>
      <path d="M17 4.500h15v24H17z" fill="white" stroke={fill} strokeWidth="1.500" />
      {letter === "W" ? (
        <path d="M19 9h10.500M19 12.500h10.500M19 16h10.500M19 19.500h10.500M19 23h10.500" stroke={fill} strokeWidth="1.800" />
      ) : (
        <path d="M18 9h12M18 13h12M18 17h12M18 21h12M18 25h12M24.500 5v23" stroke={fill} strokeWidth="1.600" />
      )}
      <path d="M0 3.500 19 0v33L0 29.500z" fill={fill} />
      <text x="9.500" y="22" textAnchor="middle" fontSize="15" fontWeight="700" fill="white" fontFamily="Open Sans">
        {letter}
      </text>
    </Svg>
  );
}

function TaskButton({ className, active = false, children }: { className: string; active?: boolean; children: ReactNode }) {
  return (
    <div className={`flex h-full shrink-0 flex-col items-center pt-[13px] ${className} ${active ? "bg-[#453d3d]" : ""}`}>
      <div className="flex h-[34px] items-center">{children}</div>
      <div className="mt-auto h-[2px] w-full bg-[#76b9ed]" />
    </div>
  );
}

function Taskbar() {
  return (
    <div className="flex h-[59px] items-center bg-[linear-gradient(90deg,#1d1d1b_0,#1d1d1b_588px,#1c120c_600px,#18100c_700px,#030101_760px,#030101_810px,#1c0607_840px,#060202_890px,#020101_1020px,#140c0a_1060px,#180f0c_1110px,#22080b_1190px,#1a0507_1290px,#160a08_1400px,#1f1f1d_1414px,#1f1f1d_1919px)] text-white">
      <Svg w={25} h={25} className="ml-[23px]">
        <path d="M0 3.500 10 2v9.500H0zM11.500 1.800 24.500 0v11.500h-13zM0 12.800h10v9.500L0 21zM11.500 12.800h13v11.700l-13-1.800z" fill="white" />
      </Svg>
      <div className="ml-[23px] flex h-full w-[516px] items-center bg-[#333]">
        <Svg w={34} h={34} className="ml-[13px]">
          <circle cx="17" cy="17" r="14.700" stroke="#999" strokeWidth="4" />
          <circle cx="17" cy="17" r="14.200" stroke="white" strokeWidth="3.400" />
        </Svg>
        <T w={274} className="mt-[3px] ml-[7px] text-[19px] text-[#9b9b9b]">Search the web and Windows</T>
        <Svg w={18} h={24} className="ml-[149px]">
          <path d="M4 .700h9.500v16.600H4zM1 8v11.500h15.500V8M8.700 20v3M5 23.300h7.500" stroke="#999" strokeWidth="1.500" />
        </Svg>
      </div>
      <Svg w={31} h={22} className="ml-[20px]">
        <path d="M7 1h17.500v20H7zM4 4H1v14h3M27.500 4h3v14h-3" stroke="white" strokeWidth="1.300" />
      </Svg>
      <FaEdgeLegacy className="ml-[46px] h-[34px] w-[32px] shrink-0 text-[#0078d7]" />
      <TaskButton className="ml-[28px] w-[61px]">
        <Svg w={28} h={34}>
          <path d="M0 2h28v19l-11 10H0z" fill="#f2e596" />
          <path d="M17 21h11L17 31z" fill="#7d774c" />
        </Svg>
      </TaskButton>
      <TaskButton className="ml-[14px] w-[61px]">
        <Svg w={33} h={34}>
          <path d="M0 4h13l3 3h16.500v21H0z" fill="#ffe796" />
          <path d="M0 4h13l2 4H0z" fill="#fdc930" />
          <path d="M2 5.500h3" stroke="#3fb8ea" strokeWidth="1.500" />
          <path d="M5.500 30V20q0-3 3-3h15q3 0 3 3v10h-5.500v-6h-10v6z" fill="#39b4e8" />
        </Svg>
      </TaskButton>
      <TaskButton className="ml-[14px] w-[61px]">
        <Svg w={36} h={34}>
          <path d="M15 0Q0 4 0 17t15 17Q4 28 4 17T15 0z" fill="#f7941e" />
          <ellipse cx="20" cy="17" rx="16" ry="15.500" fill="#2c2255" />
          <path d="M8 24h24q-4 6-12 6T8 24z" fill="#43358c" />
          <path d="M4 12.500h31M4 17h31M4 21.500h31" stroke="white" strokeWidth="2.200" />
        </Svg>
      </TaskButton>
      <TaskButton className="ml-[14px] w-[61px]">
        <svg width="33" height="33" viewBox="0 0 48 48" className="block">
          <circle cx="24" cy="24" r="24" fill="#fdd140" />
          <path d="M24 24 3.200 12A24 24 0 0 0 24 48L34.400 30z" fill="#1ca261" />
          <path d="M24 13h20.800A24 24 0 0 0 3.200 12l10.400 18z" fill="#de5145" />
          <circle cx="24" cy="24" r="11" fill="white" />
          <circle cx="24" cy="24" r="8.800" fill="#4a8af4" />
        </svg>
      </TaskButton>
      <TaskButton className="ml-[14px] w-[61px]">
        <OfficeIcon letter="W" fill="#2a5699" />
      </TaskButton>
      <TaskButton className="ml-[8px] w-[73px]" active>
        <OfficeIcon letter="X" fill="#1f7244" />
      </TaskButton>
      <Svg w={19} h={11} className="ml-[299px]"><path d="m1 10 8.500-8.500L18 10" stroke="white" strokeWidth="1.300" /></Svg>
      <Svg w={22} h={18} className="ml-[28px]">
        <path d="M.7 5.500H4L9 1v16l-5-4.500H.7zM13 5l7.500 8M20.500 5 13 13" stroke="white" strokeWidth="1.200" />
      </Svg>
      <Svg w={24} h={14} className="ml-[26px]">
        <path d="M.7.700h20v12.600H.7z" stroke="white" strokeWidth="1.300" />
        <path d="M2.500 2.500h16v9h-16zM21 4h2v6h-2z" fill="white" />
      </Svg>
      <Svg w={22} h={20} className="ml-[31px]">
        <path d="M7.500 17 9 12l6.500-11 3 1.500L12.500 14zM7 10q-6 1-6 5t4 4 5-5-1-3M11 13q2 4 3 0t2 1M12 7q8-2 8 0t-4 3" stroke="white" strokeWidth="1.300" />
      </Svg>
      <Svg w={33} h={20} className="ml-[31px]">
        <path d="M.7.700h31.300v17.600H.7z" stroke="white" strokeWidth="1.300" />
        <path d="M4 5h25M4 9.500h25" stroke="white" strokeWidth="1.300" strokeDasharray="1.500 1.500" />
        <path d="M5 14.500h3M10.500 14.500h13M26 14.500h3" stroke="white" strokeWidth="1.300" />
      </Svg>
      <div className="ml-[24px] flex w-[84px] flex-col items-center gap-[11px]">
        <T w={75} className="text-[17px]">12:46 PM</T>
        <T w={84} className="text-[17px]">12/1/2016</T>
      </div>
      <Svg w={25} h={25} className="ml-[28px]">
        <path d="M.7 1h23v17.500h-7.500L12 23.500l-4.500-5H.7z" stroke="white" strokeWidth="1.300" />
      </Svg>
      <div className="ml-[29px] h-full w-[2px] bg-[#666]" />
    </div>
  );
}

export default function App() {
  return (
    <div className="flex h-[1080px] w-[1919px] flex-col overflow-hidden border border-[#f00] bg-[#e6e6e6] font-['Open_Sans',sans-serif]">
      <div className="bg-[#217346]">
        <TitleBar />
        <Tabs />
      </div>
      <Ribbon />
      <FormulaBar />
      <Sheet />
      <SheetTabs />
      <StatusBar />
      <Taskbar />
    </div>
  );
}
